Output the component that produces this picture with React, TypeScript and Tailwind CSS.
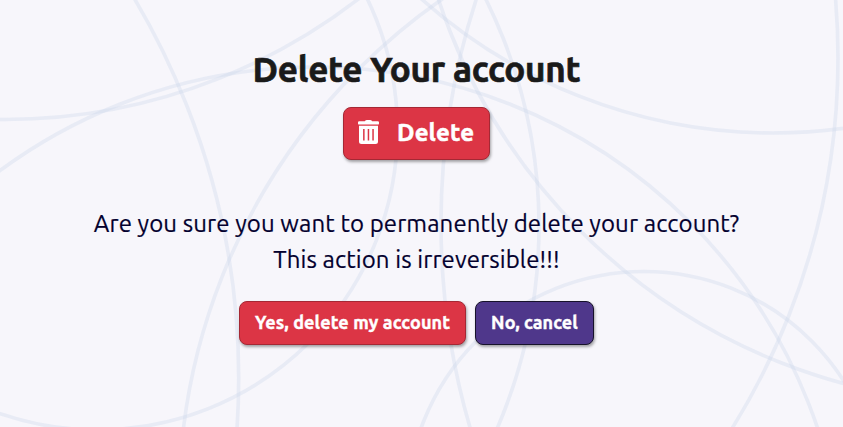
const circles: [number, number, number][] = [
  [5, -458.5, 578],
  [315, 597.3, 530.3],
  [-502.3, 378, 741],
  [792, 502.6, 613],
  [97.4, 129.9, 300],
  [773, -395, 528],
  [996.8, -183.8, 587.6],
  [1171, 223.5, 730],
  [29, 226, 510],
  [138.5, 58, 699.5],
  [644, 508.5, 237],
];

function Backdrop() {
  return (
    <svg className="absolute inset-0 h-full w-full" viewBox="0 0 843 427" fill="none" stroke="#cbd6ea" strokeOpacity="0.34" strokeWidth="3.6" aria-hidden="true">
      {circles.map(([cx, cy, r]) => (
        <circle key={`${cx}`} cx={cx} cy={cy} r={r} />
      ))}
    </svg>
  );
}

function TrashIcon() {
  return (
    <svg className="mb-[3px] h-6 w-[21px] shrink-0" viewBox="0 0 21 24" fill="#fff" aria-hidden="true">
      <path d="M1.200 1.300h5.600l.6-.7Q8 0 8.700 0h3.600q.7 0 1.300.6l.6.7h5.600A1.200 1.200 0 0 1 21 2.500v.9a1.200 1.200 0 0 1-1.200 1.200H1.200A1.200 1.200 0 0 1 0 3.400v-.9a1.200 1.200 0 0 1 1.200-1.200z" />
      <path fillRule="evenodd" d="M1 5.700h19v15.800a2.500 2.500 0 0 1-2.500 2.500h-14A2.500 2.500 0 0 1 1 21.500zM5.100 9v11.500h1.500V9zm4.600 0v11.500h1.500V9zm4.600 0v11.500h1.500V9z" />
    </svg>
  );
}

export default function App() {
  return (
    <main className="relative h-[427px] w-[843px] overflow-hidden bg-[#f7f6fb] font-[Ubuntu,'Noto_Sans',sans-serif]">
      <Backdrop />
      <div className="relative flex w-[833px] flex-col items-center pt-[47px]">
        <h1 className="h-[60px] text-[35px] leading-[44px] font-bold tracking-[-0.25px] whitespace-nowrap text-[#1a1a1a] [-webkit-text-stroke:0.7px_#1a1a1a]">Delete Your account</h1>
        <button className="flex h-[53px] w-[147px] items-center rounded-lg border border-[#a52834] bg-[#dc3545] pl-[14px] text-[24px] font-bold tracking-[0.15px] text-white shadow-[1px_2px_3px_rgba(0,0,0,0.35)] [-webkit-text-stroke:0.5px_white]">
          <TrashIcon />
          <span className="mb-[2px] ml-[18px]">Delete</span>
        </button>
        <p className="mt-[46px] text-center text-[24px] leading-[36px] tracking-[0.1px] whitespace-nowrap text-[#03002e] [-webkit-text-stroke:0.2px_#03002e]">
          <span>Are you sure you want to permanently delete your account?</span>
          <br />
          <span>This action is irreversible!!!</span>
        </p>
        <div className="mt-[23px] flex gap-[9px] text-[18px] font-bold tracking-[0.12px] whitespace-nowrap text-white [-webkit-text-stroke:0.4px_white]">
          <button className="h-[44px] w-[227px] rounded-lg border border-[#a52834] bg-[#dc3545] pb-[2px] shadow-[1px_2px_3px_rgba(0,0,0,0.35)]">Yes, delete my account</button>
          <button className="h-[44px] w-[119px] rounded-lg border border-[#17122b] bg-[#4f378b] pb-[2px] shadow-[1px_2px_3px_rgba(0,0,0,0.35)]">No, cancel</button>
        </div>
      </div>
    </main>
  );
}
